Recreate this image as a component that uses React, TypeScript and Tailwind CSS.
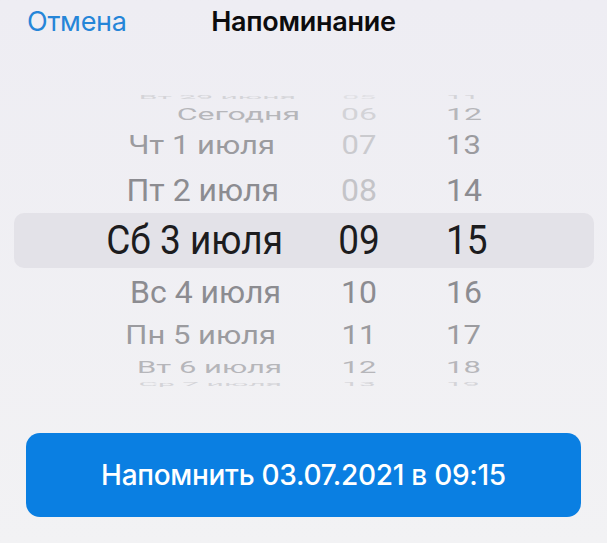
import React from "react";

type WheelRow = {
  date: string;
  hour: string;
  minute: string;
  rowCls: string;
  innerCls: string;
  gridCls: string;
  dateCls: string;
  hourCls: string;
  minuteCls: string;
};

// Wheel rows from top to bottom; far rows are squeezed and fade out like a drum.
const rows: WheelRow[] = [
  {
    date: "Вт 29 июня",
    hour: "05",
    minute: "11",
    rowCls: "h-[12px]",
    innerCls: "text-[30px] scale-y-[0.2]",
    gridCls: "grid-cols-[300px_118px_1fr]",
    dateCls: "pr-[4px] text-[#d4d4d8]",
    hourCls: "text-[#e0e0e4]",
    minuteCls: "text-[#d4d4d8]",
  },
  {
    date: "Сегодня",
    hour: "06",
    minute: "12",
    rowCls: "h-[22px]",
    innerCls: "text-[32px] scale-y-[0.53]",
    gridCls: "grid-cols-[300px_118px_1fr]",
    dateCls: "pr-0 text-[#b6b6ba]",
    hourCls: "text-[#d3d3d7]",
    minuteCls: "text-[#b6b6ba]",
  },
  {
    date: "Чт 1 июля",
    hour: "07",
    minute: "13",
    rowCls: "h-[41px]",
    innerCls: "text-[31px] scale-y-[0.82]",
    gridCls: "grid-cols-[300px_118px_1fr]",
    dateCls: "pr-[25px] text-[#9b9b9f]",
    hourCls: "text-[#cacace]",
    minuteCls: "text-[#9b9b9f]",
  },
  {
    date: "Пт 2 июля",
    hour: "08",
    minute: "14",
    rowCls: "h-[47px]",
    innerCls: "text-[32px] scale-y-[0.96]",
    gridCls: "grid-cols-[300px_118px_1fr]",
    dateCls: "pr-[21px] text-[#8c8c91]",
    hourCls: "text-[#c4c4c8]",
    minuteCls: "text-[#8c8c91]",
  },
  {
    date: "Сб 3 июля",
    hour: "09",
    minute: "15",
    rowCls: "h-[55px] ml-[14px] mr-[13px] rounded-[10px] bg-[#e3e2e8]",
    innerCls: "text-[37px] scale-y-[1.1]",
    gridCls: "grid-cols-[286px_118px_1fr]",
    dateCls: "pr-[17px] text-[#1c1c1e]",
    hourCls: "text-[#1c1c1e]",
    minuteCls: "text-[#1c1c1e]",
  },
  {
    date: "Вс 4 июля",
    hour: "10",
    minute: "16",
    rowCls: "h-[47px]",
    innerCls: "text-[32px] scale-y-[0.96]",
    gridCls: "grid-cols-[300px_118px_1fr]",
    dateCls: "pr-[19px] text-[#8c8c91]",
    hourCls: "text-[#8c8c91]",
    minuteCls: "text-[#8c8c91]",
  },
  {
    date: "Пн 5 июля",
    hour: "11",
    minute: "17",
    rowCls: "h-[41px]",
    innerCls: "text-[31px] scale-y-[0.82]",
    gridCls: "grid-cols-[300px_118px_1fr]",
    dateCls: "pr-[24px] text-[#9b9b9f]",
    hourCls: "text-[#9b9b9f]",
    minuteCls: "text-[#9b9b9f]",
  },
  {
    date: "Вт 6 июля",
    hour: "12",
    minute: "18",
    rowCls: "h-[22px]",
    innerCls: "text-[31px] scale-y-[0.55]",
    gridCls: "grid-cols-[300px_118px_1fr]",
    dateCls: "pr-[18px] text-[#b6b6ba]",
    hourCls: "text-[#b6b6ba]",
    minuteCls: "text-[#b6b6ba]",
  },
  {
    date: "Ср 7 июля",
    hour: "13",
    minute: "19",
    rowCls: "h-[12px]",
    innerCls: "text-[30px] scale-y-[0.2]",
    gridCls: "grid-cols-[300px_118px_1fr]",
    dateCls: "pr-[18px] text-[#d4d4d8]",
    hourCls: "text-[#d4d4d8]",
    minuteCls: "text-[#d4d4d8]",
  },
];

function Wheel() {
  return (
    <div className="flex flex-col font-['Roboto','Liberation_Sans',sans-serif]">
      {rows.map((r) => (
        <div key={r.date} className={`flex items-center ${r.rowCls}`}>
          <div className={`grid w-full items-center leading-none ${r.gridCls} ${r.innerCls}`}>
            <span className={`text-right whitespace-nowrap ${r.dateCls}`}>{r.date}</span>
            <span className={`text-center ${r.hourCls}`}>{r.hour}</span>
            <span className={`pl-[28px] ${r.minuteCls}`}>{r.minute}</span>
          </div>
        </div>
      ))}
    </div>
  );
}

export default function App() {
  return (
    <div className="w-[607px] h-[543px] overflow-hidden bg-gradient-to-b from-[#eeedf3] to-[#f2f2f4] flex flex-col font-['Inter','Liberation_Sans',sans-serif]">
      <header className="grid grid-cols-[1fr_auto_1fr] items-center h-[43px] text-[27px] leading-none">
        <button className="justify-self-start pl-[27px] text-[#2585d8] tracking-[-0.01em]">Отмена</button>
        <h1 className="font-semibold text-[#0c0c0e] tracking-[-0.01em]">Напоминание</h1>
        <span />
      </header>

      <div className="mt-[48px]">
        <Wheel />
      </div>

      <button className="mt-[43px] mx-[26px] h-[84px] rounded-[14px] bg-[#0a7fe2] text-white text-[28px] font-medium tracking-[-0.01em]">
        Напомнить 03.07.2021 в 09:15
      </button>
    </div>
  );
}
